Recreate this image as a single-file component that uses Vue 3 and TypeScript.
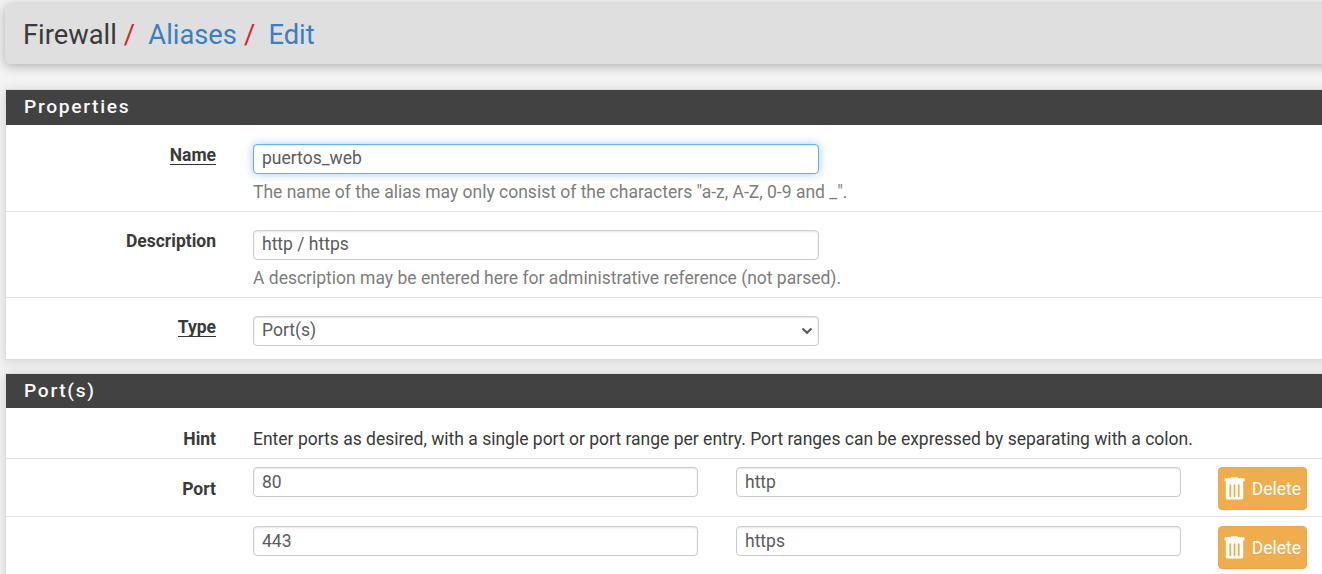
<script setup lang="ts">
interface PortEntry {
  port: string
  description: string
}

const entries: PortEntry[] = [
  { port: '80', description: 'http' },
  { port: '443', description: 'https' },
]
</script>

<template>
  <main class="page">
    <header class="crumbs">
      <span>Firewall</span><i class="slash">/</i><a>Aliases</a><i class="slash">/</i><a>Edit</a>
    </header>

    <section class="panel properties">
      <h2><span>Properties</span></h2>
      <div class="row">
        <label class="label"><span class="required">Name</span></label>
        <div class="content">
          <div class="field wide focused"><span>puertos_web</span></div>
          <p class="help"><span>The name of the alias may only consist of the characters "a-z, A-Z, 0-9 and _".</span></p>
        </div>
      </div>
      <div class="row">
        <label class="label"><span>Description</span></label>
        <div class="content">
          <div class="field wide"><span>http / https</span></div>
          <p class="help"><span>A description may be entered here for administrative reference (not parsed).</span></p>
        </div>
      </div>
      <div class="row last">
        <label class="label"><span class="required">Type</span></label>
        <div class="content">
          <div class="field wide select">
            <span>Port(s)</span>
            <svg width="12" height="8" viewBox="0 0 12 8"><path d="M1.5 1.5 6 5.8 10.5 1.5" fill="none" stroke="#555" stroke-width="2" /></svg>
          </div>
        </div>
      </div>
    </section>

    <section class="panel ports">
      <h2><span>Port(s)</span></h2>
      <div class="row hint">
        <label class="label"><span>Hint</span></label>
        <p class="hint-text"><span>Enter ports as desired, with a single port or port range per entry. Port ranges can be expressed by separating with a colon.</span></p>
      </div>
      <div v-for="(entry, index) in entries" :key="entry.port" class="row entry">
        <label class="label"><span v-if="index === 0">Port</span></label>
        <div class="field half"><span>{{ entry.port }}</span></div>
        <div class="field half"><span>{{ entry.description }}</span></div>
        <button class="delete" type="button">
          <svg width="21" height="23" viewBox="0 0 21 23">
            <path d="M6.700 1.300Q6.800.3 7.800.3h5.400q1 0 1.100 1h5.400q.8 0 .8.8v2.200H.5V2.100q0-.8.8-.8Z" fill="#fff" />
            <path d="M1.800 3.800H19.200V20.800Q19.200 22.500 17.500 22.500H3.500Q1.800 22.500 1.800 20.800Z" fill="#fff" />
            <path d="M6.300 8.200V19.300M10.500 8.200V19.300M14.700 8.200V19.300" stroke="#f0ad4e" stroke-width="1.800" stroke-linecap="round" />
          </svg>
          <span>Delete</span>
        </button>
      </div>
    </section>
  </main>
</template>

<style>
body {
  margin: 0;
  overflow: hidden;
  background: #f4f4f4;
}
</style>

<style scoped>
.page {
  box-sizing: border-box;
  width: 1322px;
  height: 574px;
  padding: 4px 0 0 5px;
  overflow: hidden;
  background: #f4f4f4;
  color: #3a3a3a;
  font: 17.5px/24px Roboto, sans-serif;
}

.crumbs {
  display: flex;
  box-sizing: border-box;
  width: 1340px;
  height: 60px;
  padding-left: 18px;
  border-radius: 5px;
  background: #dfdfdf;
  box-shadow: 0 2px 12px rgba(0, 0, 0, 0.3);
  font-size: 27.3px;
  line-height: 62px;
}

.crumbs a {
  color: #3a80c0;
}

.slash {
  width: 31.5px;
  padding-left: 7px;
  box-sizing: border-box;
  color: #cc2a2f;
  font-style: normal;
}

.panel {
  box-sizing: border-box;
  width: 1340px;
  border: 1px solid #ddd;
  background: #fff;
  box-shadow: 0 2px 12px rgba(0, 0, 0, 0.15);
}

.properties {
  height: 271px;
  margin-top: 25px;
}

.ports {
  height: 230px;
  margin-top: 13px;
}

h2 {
  box-sizing: border-box;
  height: 35px;
  margin: 0;
  padding-left: 18px;
  background: #424242;
  color: #f8f8f8;
  font-size: 19.25px;
  font-weight: 500;
  line-height: 33px;
  letter-spacing: 1.65px;
}

.ports h2 {
  height: 34px;
}

.row {
  display: flex;
  box-sizing: border-box;
  height: 86px;
  padding-top: 18px;
  border-bottom: 1px solid #e2e2e2;
}

.properties .row:nth-child(2) {
  height: 87px;
}

.properties .row:nth-child(2) .content {
  padding-top: 0.5px;
}

.properties .row:nth-child(2) .label {
  padding-top: 1px;
}

.row.last {
  border: 0;
}

.label {
  flex: none;
  width: 210px;
  margin-right: 37px;
  text-align: right;
  font-weight: 700;
  line-height: 23px;
}

.label .required {
  display: inline-block;
  height: 20px;
  border-bottom: 1px solid #333;
}

.field {
  display: flex;
  align-items: center;
  box-sizing: border-box;
  height: 30px;
  padding: 0 8px;
  border: 1px solid #ccc;
  border-radius: 4px;
  background: #fff;
  box-shadow: inset 0 1px 2px rgba(0, 0, 0, 0.1);
  color: #5c5c5c;
  line-height: 28px;
}

.field span {
  position: relative;
  top: -1px;
}

.wide {
  width: 566px;
}

.half {
  flex: none;
  width: 445px;
  margin-right: 38px;
}

.half + .half {
  margin-right: 37px;
}

.focused {
  border-color: #66afe9;
  box-shadow: inset 0 1px 1px rgba(0, 0, 0, 0.07), 0 0 10px rgba(102, 175, 233, 0.6);
}

.field.half span {
  top: 0;
}

.select {
  justify-content: space-between;
  padding-right: 5px;
}

.help {
  margin: 6px 0 0;
  color: #7d7d7d;
  white-space: nowrap;
}

.hint {
  height: 51px;
}

.hint-text {
  margin: 1px 0 0;
  white-space: nowrap;
}

.hint .label {
  padding-top: 2px;
}

.entry {
  height: 58px;
  padding-top: 8px;
}

.entry + .entry {
  padding-top: 9px;
}

.entry .label {
  padding-top: 11px;
}

.delete {
  display: flex;
  align-items: center;
  justify-content: space-between;
  box-sizing: border-box;
  width: 89px;
  height: 43px;
  padding: 0 5px;
  border: 1px solid #eea84a;
  border-radius: 4px;
  background: #f0ad4e;
  color: #fff;
  font: inherit;
}
</style>
